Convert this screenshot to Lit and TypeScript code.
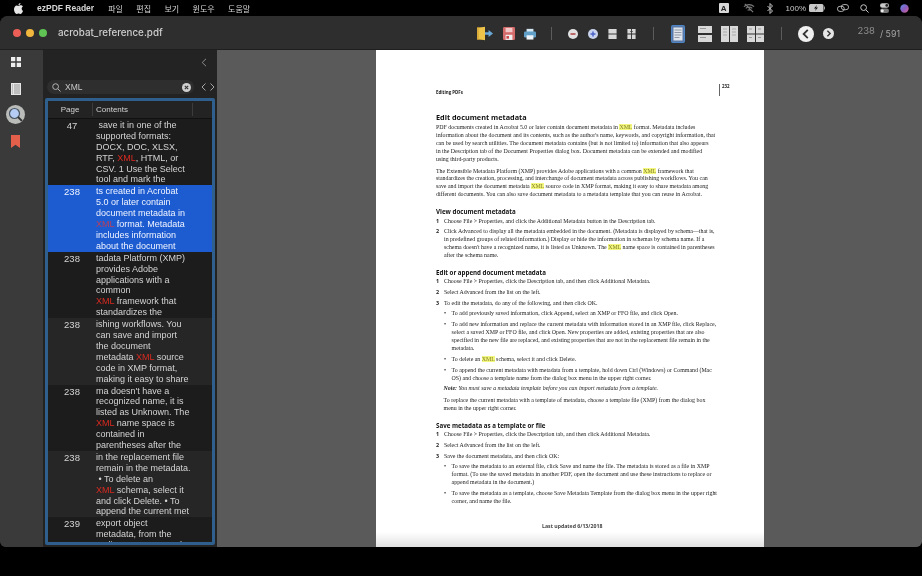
import { LitElement, css, html } from "lit";
import { customElement } from "lit/decorators.js";

const results = [
  { page: "47", lines: [" save it in one of the", "supported formats:", "DOCX, DOC, XLSX,", "RTF, XML, HTML, or", "CSV. 1 Use the Select", "tool and mark the"] },
  { page: "238", cls: "selected", lines: ["ts created in Acrobat", "5.0 or later contain", "document metadata in", "XML format. Metadata", "includes information", "about the document"] },
  { page: "238", lines: ["tadata Platform (XMP)", "provides Adobe", "applications with a", "common", "XML framework that", "standardizes the"] },
  { page: "238", cls: "alt", lines: ["ishing workflows. You", "can save and import", "the document", "metadata XML source", "code in XMP format,", "making it easy to share"] },
  { page: "238", lines: ["ma doesn't have a", "recognized name, it is", "listed as Unknown. The", "XML name space is", "contained in", "parentheses after the"] },
  { page: "238", cls: "alt", lines: ["in the replacement file", "remain in the metadata.", " • To delete an", "XML schema, select it", "and click Delete. • To", "append the current met"] },
  { page: "239", lines: ["export object", "metadata, from the", "outline, comment and"] },
];

const mark = (text: string, cls: string) => {
  const parts = text.split("XML");
  return parts.map((p, i) => (i === 0 ? p : html`<span class=${cls}>XML</span>${p}`));
};

const lines = (rows: string[]) => rows.map((l) => html`<div class="ln">${mark(l, "hl")}</div>`);

@customElement("app-root")
export class AppRoot extends LitElement {
  static styles = css`
    :host {
      display: block;
      width: 922px;
      height: 576px;
      overflow: hidden;
      background: #000;
      font-family: "Liberation Sans", "Noto Sans CJK KR", sans-serif;
      filter: blur(0.3px);
    }

    svg {
      display: block;
    }

    .menubar {
      display: flex;
      align-items: center;
      height: 16px;
      padding: 0 13px 0 14px;
      color: #d6d6d6;
      font-size: 8px;
    }

    .apple {
      width: 9px;
      height: 11px;
      margin-right: 14px;
    }

    .app-name {
      margin-right: 14px;
      font-weight: 700;
      font-size: 8.5px;
    }

    .menus {
      display: flex;
      gap: 13.4px;
      font-family: "Noto Sans CJK KR", sans-serif;
    }

    .status {
      display: flex;
      align-items: center;
      margin-left: auto;
      color: #c8c8c8;
    }

    .key {
      display: grid;
      place-items: center;
      width: 10px;
      height: 10px;
      margin-right: 14px;
      border-radius: 1px;
      background: #d8d8d8;
      color: #222;
      font-size: 8px;
      font-weight: 700;
    }

    .status .wifi { margin-right: 12px; }
    .status .bt { margin-right: 13px; }
    .status .pct { margin-right: 3px; }
    .status .batt { margin-right: 12px; }
    .status .link { margin-right: 11px; }
    .status .find { margin-right: 11px; }
    .status .cc { margin-right: 11px; }

    .window {
      display: flex;
      flex-direction: column;
      height: 531px;
      overflow: hidden;
      border-radius: 8px 8px 6px 6px;
      background: #2e2e2e;
    }

    .toolbar {
      display: flex;
      flex: none;
      align-items: center;
      height: 34px;
      padding-left: 13px;
      border-bottom: 1px solid #1f1f1f;
      box-sizing: border-box;
      background: #2e2e2e;
    }

    .lights {
      display: flex;
      gap: 5px;
      margin-right: 11px;
    }

    .lights i {
      width: 8px;
      height: 8px;
      border-radius: 50%;
    }

    .red { background: #ec5f57; }
    .amber { background: #f0b63e; }
    .green { background: #5fc454; }

    .title {
      color: #cfcfcf;
      font-family: "Inter", sans-serif;
      font-size: 9.8px;
      font-weight: 500;
    }

    .tools {
      display: flex;
      align-items: center;
      margin-left: auto;
      padding: 2px 22px 0 0;
    }

    .group {
      display: flex;
      align-items: center;
    }

    .g1 { gap: 9.5px; }
    .g2 { gap: 10px; }
    .g3 { gap: 9px; }
    .g4 { gap: 9px; }
    .g3 > svg:first-child { margin-right: 4px; }

    .sep {
      width: 1px;
      height: 13px;
      margin: 0 16px 0 15px;
      background: #5c5c5c;
    }

    .g2 + .sep { margin: 0 17px; }
    .g3 + .sep { margin: 0 16px 0 17px; }

    .pager {
      display: flex;
      align-items: baseline;
      margin-left: 23px;
      font-family: "Inter", sans-serif;
      color: #8f8f8f;
    }

    .pager .cur {
      margin-right: 5px;
      font-size: 9.5px;
      transform: translateY(-3px);
    }

    .pager .tot {
      color: #a6a6a6;
      font-size: 8.8px;
    }

    .body {
      display: flex;
      flex: 1;
      min-height: 0;
    }

    .rail {
      display: flex;
      flex: none;
      flex-direction: column;
      align-items: center;
      width: 31px;
      padding: 7px 13px 0 0;
      margin-right: -1px;
      background: #3a3a3a;
    }

    .rail svg:nth-child(1) { margin-bottom: 15.5px; }
    .rail svg:nth-child(2) { margin-bottom: 10px; }
    .rail svg:nth-child(3) { margin-bottom: 11px; }

    .sidebar {
      display: flex;
      flex: none;
      flex-direction: column;
      width: 174px;
      background: #232323;
    }

    .side-top {
      display: flex;
      flex: none;
      align-items: center;
      justify-content: flex-end;
      height: 25px;
      padding-right: 10px;
    }

    .search-row {
      display: flex;
      flex: none;
      align-items: center;
      height: 18px;
      padding-left: 4px;
      margin-top: 3px;
      margin-bottom: 2px;
    }

    .search {
      display: flex;
      align-items: center;
      width: 147px;
      height: 14px;
      padding: 0 3px 0 5px;
      box-sizing: border-box;
      border-radius: 7px;
      background: #2e2e2e;
      color: #c9c9c9;
      font-size: 8.5px;
    }

    .search span {
      flex: 1;
      margin-left: 4px;
    }

    .arrows {
      display: flex;
      gap: 4px;
      margin-left: 7px;
    }

    .table {
      display: flex;
      flex: none;
      flex-direction: column;
      width: 170px;
      height: 447px;
      margin-left: 2px;
      box-sizing: border-box;
      overflow: hidden;
      border: 3px solid #2f5f8c;
      border-radius: 2px;
      background: #1c1c1c;
      color: #d4d4d4;
      font-size: 9px;
    }

    .head {
      display: flex;
      flex: none;
      align-items: center;
      height: 17px;
      border-bottom: 1px solid #111;
      background: #232323;
      font-size: 8px;
      color: #d4d4d4;
    }

    .head .p {
      width: 45px;
      height: 13px;
      line-height: 13px;
      text-align: center;
      border-right: 1px solid #3c3c3c;
      box-sizing: border-box;
    }

    .head .c {
      width: 100px;
      height: 13px;
      padding-left: 3px;
      line-height: 13px;
      border-right: 1px solid #3c3c3c;
      box-sizing: border-box;
    }

    .row {
      display: flex;
      flex: none;
      height: 66.4px;
      padding-top: 1px;
      box-sizing: border-box;
      overflow: hidden;
      background: #1c1c1c;
    }

    .row.alt {
      background: #262626;
    }

    .row.selected {
      background: #1c5bd0;
      color: #f0f4ff;
    }

    .row .num {
      flex: none;
      width: 48px;
      font-size: 9.5px;
      line-height: 11px;
      text-align: center;
    }

    .ln {
      height: 10.9px;
      line-height: 11px;
      white-space: pre;
    }

    .hl {
      color: #d92a20;
    }

    .row.selected .hl {
      color: #b8405c;
    }

    .canvas {
      display: flex;
      flex: 1;
      justify-content: flex-start;
      padding-left: 159px;
      background: #5a5a5a;
    }

    .page {
      flex: none;
      width: 388px;
      height: 497px;
      padding: 34px 0 0 60px;
      box-sizing: border-box;
      overflow: hidden;
      background: linear-gradient(#fff 482px, #e2e2e2);
      color: #1c1c1c;
      font-family: "Liberation Serif", serif;
      font-size: 5.9px;
      line-height: 7.9px;
      white-space: nowrap;
    }

    .running {
      display: flex;
      align-items: flex-start;
      height: 28.5px;
      font-family: "Open Sans", sans-serif;
      font-weight: 700;
      font-size: 4.4px;
      color: #222;
    }

    .running .lab {
      width: 283px;
      padding-top: 5px;
    }

    .running .no {
      height: 12px;
      padding-left: 2px;
      border-left: 1px solid #666;
      line-height: 5px;
    }

    h1, h2 {
      margin: 0;
      font-family: "Open Sans", sans-serif;
      color: #111;
    }

    h1 {
      font-size: 7.3px;
      line-height: 9px;
      margin-bottom: 2.55px;
    }

    h2 {
      font-size: 6.2px;
      line-height: 8px;
      margin-top: 9px;
      margin-bottom: 1.3px;
    }

    p {
      margin: 0 0 4px;
    }

    .step {
      display: flex;
      margin-bottom: 2.8px;
    }

    .bullet {
      display: flex;
      margin-bottom: 3px;
      padding-left: 8px;
    }

    .step b {
      width: 8px;
      font-family: "Open Sans", sans-serif;
      font-size: 5.4px;
    }

    .bullet u {
      width: 7.6px;
      text-decoration: none;
    }

    .indent {
      padding-left: 7.6px;
      margin-bottom: 3.6px;
    }

    .hy {
      background: #f4f77e;
      color: #80802a;
    }

    .note {
      font-style: italic;
    }

    .updated {
      margin-top: 17px;
      padding-left: 106px;
      font-family: "Open Sans", sans-serif;
      font-weight: 700;
      font-size: 5.2px;
      color: #444;
    }
  `;

  private text(l: string) {
    return html`<div>${mark(l, "hy")}</div>`;
  }

  private step(n: string, rows: string[]) {
    return html`<div class="step"><b>${n}</b><div>${rows.map((r) => this.text(r))}</div></div>`;
  }

  private bullet(rows: string[]) {
    return html`<div class="bullet"><u>•</u><div>${rows.map((r) => this.text(r))}</div></div>`;
  }

  private renderMenubar() {
    return html`
      <div class="menubar">
        <svg class="apple" viewBox="0 0 18 22">
          <path fill="#e6e6e6" d="M13 0c.2 2-1.900 4.500-4.200 4.300C8.500 2.200 10.800.2 13 0zM9 5.800c1.200 0 2.500-1.100 4.500-1.100 1.700 0 3.400.9 4.300 2.400-3.600 2-3 7.100.2 8.700-.9 2.400-3 6.200-5.200 6.200-1.400 0-2-1-3.700-1-1.800 0-2.500 1-3.800 1C2.700 22 0 16.900 0 12.900 0 8.700 2.600 5 5.600 5c1.400 0 2.500.8 3.400.8z"/>
        </svg>
        <span class="app-name">ezPDF Reader</span>
        <div class="menus">
          <span>파일</span><span>편집</span><span>보기</span><span>윈도우</span><span>도움말</span>
        </div>
        <div class="status">
          <span class="key">A</span>
          <svg class="wifi" width="12" height="10" viewBox="0 0 13 10" fill="none" stroke="#7c7c7c" stroke-width="1.200">
            <path d="M1 3.500a8 8 0 0 1 11 0M3 5.500a5 5 0 0 1 7 0M5 7.500a2 2 0 0 1 3 0M2 .5l9 9"/>
          </svg>
          <svg class="bt" width="6" height="11" viewBox="0 0 6 11" fill="none" stroke="#c8c8c8">
            <path d="M.5 3l5 5-2.500 2.500v-10L5.500 3l-5 5"/>
          </svg>
          <span class="pct">100%</span>
          <svg class="batt" width="16" height="8" viewBox="0 0 16 8">
            <rect width="14.500" height="8" rx="1.500" fill="#c8c8c8"/><rect x="15" y="2.500" width="1" height="3" fill="#999"/>
            <path d="M8 1L5 4.500h2L6 7l3-3.500H7z" fill="#111"/>
          </svg>
          <svg class="link" width="12" height="8" viewBox="0 0 14 9" fill="none" stroke="#c8c8c8">
            <rect x=".5" y="2.500" width="8" height="6" rx="3"/><rect x="5" y=".5" width="8.500" height="6" rx="3"/>
          </svg>
          <svg class="find" width="9" height="9" viewBox="0 0 10 10" fill="none" stroke="#c8c8c8" stroke-width="1.100">
            <circle cx="4" cy="4" r="3.200"/><path d="M6.500 6.500L9.500 9.500"/>
          </svg>
          <svg class="cc" width="9" height="10" viewBox="0 0 12 13">
            <rect width="12" height="6" rx="3" fill="#c8c8c8"/><rect y="7" width="12" height="6" rx="3" fill="#777"/>
            <circle cx="9" cy="3" r="1.800" fill="#222"/><circle cx="3" cy="10" r="2" fill="#eee"/>
          </svg>
          <svg width="9" height="9" viewBox="0 0 9 9">
            <defs><linearGradient id="sr" x2="1" y2="1"><stop stop-color="#5a8ee8"/><stop offset=".5" stop-color="#8a5ec0"/><stop offset="1" stop-color="#d85f90"/></linearGradient></defs>
            <circle cx="4.500" cy="4.500" r="4.200" fill="url(#sr)"/>
          </svg>
        </div>
      </div>
    `;
  }

  private renderTools() {
    return html`
      <div class="tools">
        <div class="group g1">
          <svg width="16" height="15" viewBox="0 0 18 16">
            <path d="M0 1h9v14H0z" fill="#d9ab3a"/><path d="M2 2l7-1.500v15L2 14z" fill="#eec34a"/>
            <path d="M9 6.500h4V4l5 4-5 4V9.500H9z" fill="#6aa8d8"/>
          </svg>
          <svg width="12" height="13" viewBox="0 0 14 15">
            <rect width="14" height="15" rx="1.500" fill="#d46a6a"/><rect x="3" y="1" width="8" height="5" fill="#f2c9c9"/>
            <rect x="3" y="9" width="8" height="6" fill="#eee"/><rect x="4" y="10.500" width="3" height="3" fill="#c44"/>
          </svg>
          <svg width="12" height="12" viewBox="0 0 14 14">
            <rect x="3" y="1" width="8" height="4" fill="#d6e8f3"/><rect y="4" width="14" height="7" rx="1.500" fill="#5f9fc8"/>
            <rect x="3" y="8.500" width="8" height="5" fill="#eef4f8"/>
          </svg>
        </div>
        <div class="sep"></div>
        <div class="group g2">
          <svg width="10" height="10" viewBox="0 0 10 10"><circle cx="5" cy="5" r="5" fill="#e2e2e2"/><rect x="2.500" y="4.200" width="5" height="1.600" fill="#b34a4a"/></svg>
          <svg width="10" height="10" viewBox="0 0 10 10"><circle cx="5" cy="5" r="5" fill="#c9d3ee"/><path d="M2.500 5h5M5 2.500v5" stroke="#4a63c9" stroke-width="1.500"/></svg>
          <svg width="9" height="10" viewBox="0 0 9 11"><rect width="9" height="5" fill="#d8d8d8"/><rect y="6" width="9" height="5" fill="#d8d8d8"/></svg>
          <svg width="9" height="10" viewBox="0 0 9 11">
            <path d="M0 0h4v5H0zM5 0h4v5H5zM0 6h4v5H0zM5 6h4v5H5z" fill="#d8d8d8"/><path d="M3 2.500l1.500 1M6 2.500L4.500 3.500" stroke="#555"/>
          </svg>
        </div>
        <div class="sep"></div>
        <div class="group g3">
          <svg width="14" height="18" viewBox="0 0 14 18">
            <rect x=".5" y=".5" width="13" height="17" rx="1" fill="#5878a8" stroke="#4d86c8"/><rect x="2.500" y="2.500" width="9" height="13" fill="#dfe4ea"/>
            <path d="M3.500 5h7M3.500 7.500h7M3.500 10h7M3.500 12.500h5" stroke="#8d97a6"/>
          </svg>
          <svg width="14" height="16" viewBox="0 0 14 16"><rect width="14" height="7" fill="#d8d8d8"/><rect y="9" width="14" height="7" fill="#d8d8d8"/><path d="M2 2.500h6M2 11.500h6" stroke="#999"/></svg>
          <svg width="17" height="16" viewBox="0 0 17 16"><rect width="8" height="16" fill="#d8d8d8"/><rect x="9" width="8" height="16" fill="#d8d8d8"/><path d="M2 3h4M2 6h4M2 9h4M11 3h4M11 6h4M11 9h4" stroke="#aaa"/></svg>
          <svg width="17" height="16" viewBox="0 0 17 16">
            <path d="M0 0h8v7.500H0zM9 0h8v7.500H9zM0 8.500h8V16H0zM9 8.500h8V16H9z" fill="#d8d8d8"/>
            <path d="M2 3h3M11 3h3M2 11.500h3M11 11.500h3" stroke="#999"/>
          </svg>
        </div>
        <div class="sep"></div>
        <div class="group g4">
          <svg width="16" height="16" viewBox="0 0 16 16"><circle cx="8" cy="8" r="8" fill="#f0f0f0"/><path d="M9.800 3.800L5.600 8l4.200 4.200" fill="none" stroke="#333" stroke-width="1.800"/></svg>
          <svg width="11" height="11" viewBox="0 0 12 12"><circle cx="6" cy="6" r="6" fill="#e6e6e6"/><path d="M4.800 3l3 3-3 3" fill="none" stroke="#333" stroke-width="1.500"/></svg>
        </div>
        <div class="pager"><span class="cur">238</span><span class="tot">/ 591</span></div>
      </div>
    `;
  }

  private renderRail() {
    return html`
      <div class="rail">
        <svg width="10" height="10" viewBox="0 0 10 10"><path d="M0 0h4.300v4.300H0zM5.700 0H10v4.300H5.700zM0 5.700h4.300V10H0zM5.700 5.700H10V10H5.700z" fill="#eee"/></svg>
        <svg width="10" height="12" viewBox="0 0 10 12"><rect width="10" height="12" fill="#e6e6e6"/><path d="M1 2h1M3 2h6M1 4h1M3 4h6M1 6h1M3 6h6M1 8h1M3 8h6M1 10h1M3 10h6" stroke="#777" stroke-width=".7"/></svg>
        <svg width="19" height="19" viewBox="0 0 19 19">
          <circle cx="9.500" cy="9.500" r="9.500" fill="#b9bcb9"/><circle cx="8.500" cy="8.500" r="5" fill="#b5cdf4" stroke="#4b5563" stroke-width="1.200"/>
          <path d="M12 12l4 4" stroke="#333" stroke-width="1.800"/>
        </svg>
        <svg width="9" height="13" viewBox="0 0 9 13"><path d="M0 0h9v13L4.500 9.800 0 13z" fill="#e4604a"/></svg>
      </div>
    `;
  }

  private renderSidebar() {
    return html`
      <div class="sidebar">
        <div class="side-top">
          <svg width="6" height="9" viewBox="0 0 6 9"><path d="M5 .8L1.200 4.500 5 8.200" fill="none" stroke="#8c8c8c"/></svg>
        </div>
        <div class="search-row">
          <div class="search">
            <svg width="9" height="9" viewBox="0 0 10 10" fill="none" stroke="#b5b5b5" stroke-width="1.100"><circle cx="4" cy="4" r="3.200"/><path d="M6.500 6.500L9.500 9.500"/></svg>
            <span>XML</span>
            <svg width="9" height="9" viewBox="0 0 9 9"><circle cx="4.500" cy="4.500" r="4.500" fill="#d0d0d0"/><path d="M2.800 2.800l3.400 3.400M6.200 2.800L2.800 6.200" stroke="#333" stroke-width="1.100"/></svg>
          </div>
          <div class="arrows">
            <svg width="5" height="8" viewBox="0 0 5 8"><path d="M4.500.5L1 4l3.500 3.500" fill="none" stroke="#a5a5a5"/></svg>
            <svg width="5" height="8" viewBox="0 0 5 8"><path d="M.5.500L4 4 .5 7.500" fill="none" stroke="#a5a5a5"/></svg>
          </div>
        </div>
        <div class="table">
          <div class="head"><div class="p">Page</div><div class="c">Contents</div></div>
          ${results.map(
            (r) => html`
              <div class="row ${r.cls ?? ""}">
                <div class="num">${r.page}</div>
                <div>${lines(r.lines)}</div>
              </div>
            `,
          )}
        </div>
      </div>
    `;
  }

  private renderPage() {
    return html`
      <div class="page">
        <div class="running"><span class="lab">Editing PDFs</span><span class="no">232</span></div>
        <h1>Edit document metadata</h1>
        <p>
          ${[
            "PDF documents created in Acrobat 5.0 or later contain document metadata in XML format. Metadata includes",
            "information about the document and its contents, such as the author's name, keywords, and copyright information, that",
            "can be used by search utilities. The document metadata contains (but is not limited to) information that also appears",
            "in the Description tab of the Document Properties dialog box. Document metadata can be extended and modified",
            "using third-party products.",
          ].map((l) => this.text(l))}
        </p>
        <p>
          ${[
            "The Extensible Metadata Platform (XMP) provides Adobe applications with a common XML framework that",
            "standardizes the creation, processing, and interchange of document metadata across publishing workflows. You can",
            "save and import the document metadata XML source code in XMP format, making it easy to share metadata among",
            "different documents. You can also save document metadata to a metadata template that you can reuse in Acrobat.",
          ].map((l) => this.text(l))}
        </p>
        <h2>View document metadata</h2>
        ${this.step("1", ["Choose File > Properties, and click the Additional Metadata button in the Description tab."])}
        ${this.step("2", [
          "Click Advanced to display all the metadata embedded in the document. (Metadata is displayed by schema—that is,",
          "in predefined groups of related information.) Display or hide the information in schemas by schema name. If a",
          "schema doesn't have a recognized name, it is listed as Unknown. The XML name space is contained in parentheses",
          "after the schema name.",
        ])}
        <h2>Edit or append document metadata</h2>
        ${this.step("1", ["Choose File > Properties, click the Description tab, and then click Additional Metadata."])}
        ${this.step("2", ["Select Advanced from the list on the left."])}
        ${this.step("3", ["To edit the metadata, do any of the following, and then click OK."])}
        ${this.bullet(["To add previously saved information, click Append, select an XMP or FFO file, and click Open."])}
        ${this.bullet([
          "To add new information and replace the current metadata with information stored in an XMP file, click Replace,",
          "select a saved XMP or FFO file, and click Open. New properties are added, existing properties that are also",
          "specified in the new file are replaced, and existing properties that are not in the replacement file remain in the",
          "metadata.",
        ])}
        ${this.bullet(["To delete an XML schema, select it and click Delete."])}
        ${this.bullet([
          "To append the current metadata with metadata from a template, hold down Ctrl (Windows) or Command (Mac",
          "OS) and choose a template name from the dialog box menu in the upper right corner.",
        ])}
        <div class="indent note"><b>Note:</b> You must save a metadata template before you can import metadata from a template.</div>
        <div class="indent">
          <div>To replace the current metadata with a template of metadata, choose a template file (XMP) from the dialog box</div>
          <div>menu in the upper right corner.</div>
        </div>
        <h2>Save metadata as a template or file</h2>
        ${this.step("1", ["Choose File > Properties, click the Description tab, and then click Additional Metadata."])}
        ${this.step("2", ["Select Advanced from the list on the left."])}
        ${this.step("3", ["Save the document metadata, and then click OK:"])}
        ${this.bullet([
          "To save the metadata to an external file, click Save and name the file. The metadata is stored as a file in XMP",
          "format. (To use the saved metadata in another PDF, open the document and use these instructions to replace or",
          "append metadata in the document.)",
        ])}
        ${this.bullet([
          "To save the metadata as a template, choose Save Metadata Template from the dialog box menu in the upper right",
          "corner, and name the file.",
        ])}
        <div class="updated">Last updated 6/13/2018</div>
      </div>
    `;
  }

  render() {
    return html`
      ${this.renderMenubar()}
      <div class="window">
        <div class="toolbar">
          <div class="lights"><i class="red"></i><i class="amber"></i><i class="green"></i></div>
          <span class="title">acrobat_reference.pdf</span>
          ${this.renderTools()}
        </div>
        <div class="body">
          ${this.renderRail()} ${this.renderSidebar()}
          <div class="canvas">${this.renderPage()}</div>
        </div>
      </div>
    `;
  }
}
